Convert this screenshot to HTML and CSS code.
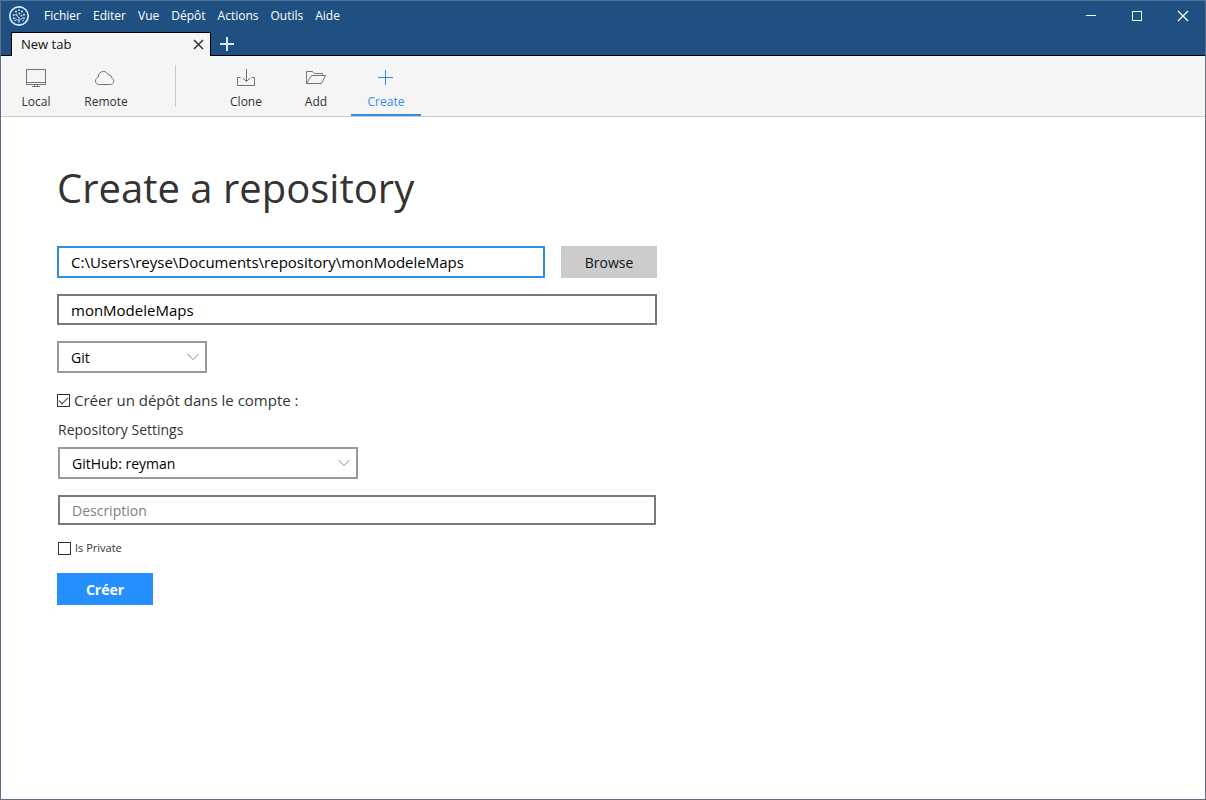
FILE: index.html
```html
<!DOCTYPE html>
<html lang="fr">
<head>
<meta charset="utf-8">
<meta name="viewport" content="width=device-width, initial-scale=1">
<title>Create a repository</title>
<link rel="stylesheet" href="styles.css">
</head>
<body>
<div class="window">
  <header class="titlebar">
    <div class="title-row">
      <svg class="logo" width="22" height="22" viewBox="0 0 22 22" fill="none" stroke="#d5ecff" aria-hidden="true">
        <circle cx="11" cy="11" r="9.2" stroke-width="1.7"/>
        <path d="M11 18V12M11 16L7 13.5M11 15.5L15 12.5M11 13L8.5 10M8 16L6 15M14 16L16 15" stroke-width=".8"/>
        <g fill="#d5ecff" stroke="none"><circle cx="11" cy="5.2" r=".9"/><circle cx="11.4" cy="8.5" r="1"/><circle cx="8" cy="6.6" r="1"/><circle cx="14" cy="6.6" r="1"/><circle cx="8.3" cy="9.6" r=".9"/><circle cx="5.8" cy="10" r="1"/><circle cx="16" cy="9.8" r="1"/><circle cx="5.8" cy="13.2" r=".9"/><circle cx="16" cy="13.2" r=".9"/><circle cx="13.5" cy="10.6" r=".9"/></g>
      </svg>
      <nav class="menu" aria-label="Menu">
        <button type="button">Fichier</button>
        <button type="button">Editer</button>
        <button type="button">Vue</button>
        <button type="button">Dépôt</button>
        <button type="button">Actions</button>
        <button type="button">Outils</button>
        <button type="button">Aide</button>
      </nav>
      <div class="window-controls">
        <button type="button" aria-label="Minimize"><svg width="12" height="12" viewBox="0 0 12 12"><path d="M1 5.5H11"/></svg></button>
        <button type="button" aria-label="Maximize"><svg width="12" height="12" viewBox="0 0 12 12"><path d="M1.5 1.5H10.5V10.5H1.5Z"/></svg></button>
        <button type="button" aria-label="Close"><svg width="12" height="12" viewBox="0 0 12 12"><path d="M1 1L11 11M11 1L1 11" stroke-width="1.3"/></svg></button>
      </div>
    </div>
    <div class="tab-row">
      <div class="tab">
        <span class="tab-name">New tab</span>
        <button type="button" class="tab-close" aria-label="Close tab"><svg width="11" height="11" viewBox="0 0 11 11"><path d="M1 1L10 10M10 1L1 10"/></svg></button>
      </div>
      <button type="button" class="tab-add" aria-label="Add tab"><svg width="14" height="14" viewBox="0 0 14 14"><path d="M0 7H14M7 0V14"/></svg></button>
    </div>
  </header>

  <nav class="toolbar" aria-label="Repositories">
    <button type="button" class="tool">
      <svg width="22" height="20" viewBox="0 0 22 20"><path d="M1.5 2.5H20.5V17.5H1.5ZM1.5 15.5H20.5M9.5 17.5V19.5M12.5 17.5V19.5M7 19.5H15"/></svg>
      <span>Local</span>
    </button>
    <button type="button" class="tool">
      <svg width="22" height="20" viewBox="0 0 22 20"><path d="M4.3 17.5C1.8 17.5 .5 15.8 .5 13.9C.5 12 1.8 10.6 3.3 10.1C3.1 6.7 5.5 4.5 8.4 4.5C10.9 4.5 12.6 5.8 13.4 8C15.7 7.9 16.9 9.3 16.8 11.2C18.3 11.7 18.9 12.9 18.8 14.2C18.7 16.2 17.3 17.5 15.3 17.5Z"/></svg>
      <span>Remote</span>
    </button>
    <div class="divider"></div>
    <button type="button" class="tool">
      <svg width="22" height="20" viewBox="0 0 22 20"><path d="M5.5 10.5H2.5V18.5H19.5V10.5H16.5M11.5 2V14.5M8 11L11.5 14.5L15 11"/></svg>
      <span>Clone</span>
    </button>
    <button type="button" class="tool">
      <svg width="22" height="20" viewBox="0 0 22 20"><path d="M1.5 16.5V4.5H7.5L9.5 6.5H17.5V8.5M1.5 16.5L6.5 8.5H20.5L16.5 16.5Z"/></svg>
      <span>Add</span>
    </button>
    <button type="button" class="tool active">
      <svg width="22" height="20" viewBox="0 0 22 20"><path d="M3 10.5H18M10.5 3V18"/></svg>
      <span>Create</span>
    </button>
  </nav>

  <main class="content">
    <h1>Create a repository</h1>
    <form class="form">
      <div class="path-row">
        <input class="field focused" type="text" aria-label="Destination path" value="C:\Users\reyse\Documents\repository\monModeleMaps">
        <button type="button" class="btn">Browse</button>
      </div>
      <input class="field name" type="text" aria-label="Name" value="monModeleMaps">
      <div class="select type">
        <select aria-label="Repository type"><option>Git</option></select>
        <svg width="12" height="8" viewBox="0 0 12 8"><path d="M.5 1L6 6.5L11.5 1"/></svg>
      </div>
      <label class="check"><input type="checkbox" checked><span>Créer un dépôt dans le compte :</span></label>
      <div class="settings">
        <label class="caption" for="account">Repository Settings</label>
        <div class="select account">
          <select id="account"><option>GitHub: reyman</option></select>
          <svg width="12" height="8" viewBox="0 0 12 8"><path d="M.5 1L6 6.5L11.5 1"/></svg>
        </div>
        <input class="field description" type="text" aria-label="Description" placeholder="Description">
        <label class="check small"><input type="checkbox"><span>Is Private</span></label>
      </div>
      <button type="submit" class="btn primary">Créer</button>
    </form>
  </main>
</div>
</body>
</html>
```
FILE: styles.css
```css
* { box-sizing: border-box; }
body {
  margin: 0;
  font-family: "Open Sans", "Noto Sans", sans-serif;
  font-size: 14px;
  color: #333;
  background: #fff;
}
button, input, select { font: inherit; color: inherit; margin: 0; }
button { border: 0; padding: 0; background: none; }
svg { display: block; flex: none; }

.window {
  min-height: 100vh;
  border: 1px solid #5c6f85;
  border-top-color: #4b759f;
  display: flex;
  flex-direction: column;
}

.titlebar { background: #205081; color: #fff; border-bottom: 1px solid #000; }
.title-row { display: flex; align-items: center; height: 30px; padding-left: 7px; }
.logo { margin-right: 14px; }
.menu { display: flex; gap: 12px; font-size: 12px; line-height: 16px; }
.window-controls { display: flex; margin-left: auto; }
.window-controls button { width: 46px; height: 30px; padding-left: 2px; display: grid; place-items: center; }
.window-controls path { stroke: #fff; fill: none; }

.tab-row { display: flex; padding-left: 10px; height: 24px; margin-top: 1px; margin-bottom: -1px; }
.tab {
  width: 200px;
  display: flex;
  align-items: center;
  justify-content: space-between;
  padding: 0 6px 0 9px;
  border: 1px solid #000;
  border-bottom: 0;
  background: #f5f5f5;
  color: #111;
  font-size: 13px;
}
.tab-name { padding-bottom: 2px; }
.tab-close path { stroke: #333; stroke-width: 1.5; }
.tab-add { padding: 0 9px; }
.tab-add path { stroke: #d5e8fa; stroke-width: 2; }

.toolbar { display: flex; height: 61px; background: #f5f5f5; border-bottom: 1px solid #ccc; }
.tool {
  width: 70px;
  display: flex;
  flex-direction: column;
  align-items: center;
  gap: 7px;
  padding-top: 11px;
  font-size: 12px;
  line-height: 16px;
  border-bottom: 2px solid transparent;
}
.tool path { stroke: #737373; fill: none; }
.tool.active { color: #338be6; border-bottom-color: #338be6; }
.tool.active path { stroke: #338be6; }
.divider { width: 1px; height: 42px; margin: 9px 35px 0 34px; background: #c8c8c8; }

.content { padding: 41px 56px; }
h1 { margin: 0 0 28px; font-size: 40px; line-height: 60px; font-weight: 400; }
.form { max-width: 600px; display: flex; flex-direction: column; align-items: flex-start; }
.path-row { display: flex; gap: 16px; width: 100%; margin-bottom: 16px; }
.field {
  width: 100%;
  height: 32px;
  padding: 0 12px;
  border: 2px solid #797979;
  border-radius: 0;
  background: #fff;
  color: #000;
  font-size: 15px;
  outline: 0;
}
.field.focused { flex: 1; border-color: #338be6; }
.field::placeholder { color: #808080; opacity: 1; }
.name { height: 31px; margin-bottom: 16px; }
.btn { width: 96px; height: 32px; flex: none; background: #ccc; color: #111; }
.btn.primary { background: #268fff; color: #fff; font-weight: 700; }

.select { display: grid; align-items: center; }
.select > * { grid-area: 1 / 1; }
.select select {
  appearance: none;
  width: 100%;
  height: 32px;
  padding: 0 12px;
  border: 2px solid #999;
  border-radius: 0;
  background: #fff;
  color: #000;
}
.select svg { justify-self: end; margin-right: 8px; pointer-events: none; }
.select path { stroke: #888; fill: none; }
.type { width: 150px; margin-bottom: 17px; }
.account { width: 300px; margin-bottom: 16px; }

.check { display: flex; align-items: center; gap: 4px; font-size: 15px; line-height: 20px; }
.check input {
  appearance: none;
  width: 13px;
  height: 13px;
  border: 1px solid #333;
  background: #fff;
  display: grid;
  place-items: center;
}
.check input:checked::before {
  content: "";
  width: 8px;
  height: 4px;
  border: solid #333;
  border-width: 0 0 1px 1px;
  transform: translateY(-1px) rotate(-45deg);
}
.settings { width: 100%; padding: 10px 1px 0; margin-bottom: 15px; }
.caption { display: block; line-height: 20px; margin-bottom: 7px; }
.field.description { height: 30px; display: block; margin-bottom: 13px; font-size: 14px; }
.check.small { font-size: 11px; }
```
